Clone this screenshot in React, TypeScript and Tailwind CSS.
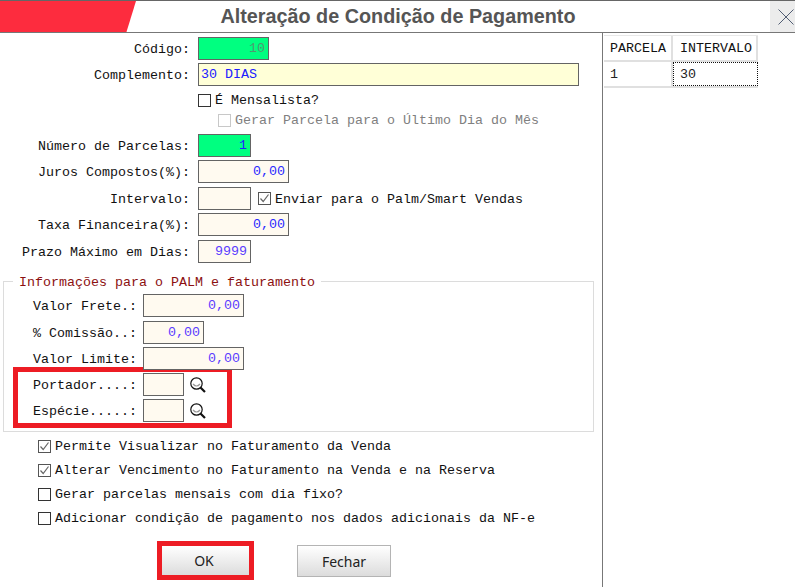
import React from "react";

const mono = "font-['Liberation_Mono','Courier_New',monospace]";

function Field({ w, bg = "bg-[#fffaf0]", color = "text-[#2a2aff]", value = "", right = true }: { w: string; bg?: string; color?: string; value?: string; right?: boolean }) {
  return (
    <div className={`${w} h-[23px] ${bg} ${color} shrink-0 border border-[#646464] pl-[2px] pr-[3px] flex items-center leading-none text-[13.33px] ${right ? "justify-end" : "justify-start"}`}>
      {value}
    </div>
  );
}

function Row({ label, className = "", children }: { label: string; className?: string; children: React.ReactNode }) {
  return (
    <div className={`flex items-center ${className}`}>
      <div className="w-[190px] pt-[3px] text-right text-[#111] leading-none whitespace-pre">{label}</div>
      <div className="ml-[8px] flex items-center">{children}</div>
    </div>
  );
}

function Check({ checked = false, disabled = false }: { checked?: boolean; disabled?: boolean }) {
  return (
    <div className={`w-[13px] h-[13px] shrink-0 border bg-white flex items-center justify-center ${disabled ? "border-[#c8c8c8]" : checked ? "border-[#555]" : "border-[#333]"}`}>
      {checked && (
        <svg width="11" height="11" viewBox="0 0 11 11" fill="none">
          <path d="M1.5 5.5 L4.2 8.5 L9.5 1.5" stroke="#666" strokeWidth="1.2" />
        </svg>
      )}
    </div>
  );
}

function Lens() {
  return (
    <svg width="16" height="16" viewBox="0 0 16 16" fill="none" className="shrink-0">
      <circle cx="6.5" cy="6.5" r="5.7" fill="#fff" stroke="#111" strokeWidth="1.2" />
      <path d="M3 7 Q6.5 11 10 7" stroke="#9a9a9a" strokeWidth="1.2" fill="none" />
      <path d="M10.5 10.5 L15 15" stroke="#111" strokeWidth="2.2" />
    </svg>
  );
}

function BoxRow({ label, w, value, className = "" }: { label: string; w: string; value?: string; className?: string }) {
  return (
    <div className={`flex items-center ${className}`}>
      <div className="w-[136px] pl-[29px] pt-[3px] text-[#111] leading-none whitespace-pre">{label}</div>
      <div className="ml-[3px]">
        <Field w={w} value={value} color="text-[#5a3cff]" />
      </div>
    </div>
  );
}

function LookupRow({ label, className = "" }: { label: string; className?: string }) {
  return (
    <div className={`flex items-center h-[23px] -ml-[14px] ${className}`}>
      <div className="w-[136px] pl-[29px] pt-[3px] text-[#111] leading-none whitespace-pre">{label}</div>
      <div className="ml-[3px] flex items-center">
        <Field w="w-[41px]" />
        <div className="ml-[6px]"><Lens /></div>
      </div>
    </div>
  );
}

function Option({ label, checked = false, className = "" }: { label: string; checked?: boolean; className?: string }) {
  return (
    <div className={`flex items-center h-[14px] pl-[38px] ${className}`}>
      <Check checked={checked} />
      <span className="ml-[4px] pt-[2px] text-[#111] leading-none whitespace-pre">{label}</span>
    </div>
  );
}

export default function App() {
  return (
    <div className={`w-[795px] h-[587px] bg-white overflow-hidden flex flex-col text-[13.33px] ${mono}`}>
      <div className="h-[33px] shrink-0 flex border-t border-t-[#666] border-b border-b-[#777]">
        <div className="relative flex-1 flex items-center justify-center">
          <div className="absolute left-0 top-0 bottom-0 w-[136px] bg-[#fd2c3e] [clip-path:polygon(0_0,100%_0,93%_100%,0_100%)]" />
          <h1 className="font-['Liberation_Sans',Arial,sans-serif] font-bold text-[19.8px] text-[#555] leading-none pl-[26px] whitespace-nowrap">
            Alteração de Condição de Pagamento
          </h1>
        </div>
        <div className="w-[25px] bg-[#ececec] flex items-center justify-end pr-[1px]">
          <svg width="16" height="16" viewBox="0 0 16 16">
            <path d="M0.5 0.5 L15.5 15.5 M15.5 0.5 L0.5 15.5" stroke="#2b3a55" strokeWidth="0.8" />
          </svg>
        </div>
      </div>

      <div className="flex-1 flex min-h-0">
        <div className="w-[602px] shrink-0 flex flex-col pt-[4px]">
          <Row label="Código:">
            <Field w="w-[71px]" bg="bg-[#00ff80]" color="text-[#4f9a70]" value="10" />
          </Row>
          <Row label="Complemento:" className="mt-[3px]">
            <Field w="w-[381px]" bg="bg-[#ffffd7]" color="text-[#2020ff]" value="30 DIAS" right={false} />
          </Row>
          <div className="flex items-center h-[14px] mt-[7px] ml-[198px]">
            <Check />
            <span className="ml-[4px] pt-[2px] text-[#111] leading-none">É Mensalista?</span>
          </div>
          <div className="flex items-center h-[14px] mt-[6px] ml-[218px]">
            <Check disabled />
            <span className="ml-[4px] pt-[2px] text-[#808080] leading-none">Gerar Parcela para o Último Dia do Mês</span>
          </div>
          <Row label="Número de Parcelas:" className="mt-[7px]">
            <Field w="w-[53px]" bg="bg-[#00ff80]" color="text-[#2020ff]" value="1" />
          </Row>
          <Row label="Juros Compostos(%):" className="mt-[3px]">
            <Field w="w-[91px]" value="0,00" />
          </Row>
          <Row label="Intervalo:" className="mt-[4px]">
            <Field w="w-[53px]" />
            <div className="ml-[7px]"><Check checked /></div>
            <span className="ml-[4px] pt-[2px] text-[#111] leading-none">Enviar para o Palm/Smart Vendas</span>
          </Row>
          <Row label="Taxa Financeira(%):" className="mt-[3px]">
            <Field w="w-[91px]" value="0,00" />
          </Row>
          <Row label="Prazo Máximo em Dias:" className="mt-[4px]">
            <Field w="w-[53px]" value="9999" color="text-[#5a3cff]" />
          </Row>

          <div className="relative mt-[18px] ml-[3px] w-[591px] h-[151px] border border-[#dcdcdc] pt-[12px]">
            <div className="absolute left-[9px] -top-[7px] bg-white px-[6px] text-[#8b1010] leading-none py-px whitespace-pre">Informações para o PALM e faturamento</div>
            <BoxRow label="Valor Frete.:" w="w-[101px]" value="0,00" />
            <BoxRow label="% Comissão..:" w="w-[61px]" value="0,00" className="mt-[4px]" />
            <BoxRow label="Valor Limite:" w="w-[101px]" value="0,00" className="mt-[3px] relative z-10" />
            <div className="-mt-[3px] ml-[9px] w-[219px] h-[61px] border-[5px] border-[#ed1c24] flex flex-col pt-[1px]">
              <LookupRow label="Portador....:" />
              <LookupRow label="Espécie.....:" className="mt-[3px]" />
            </div>
          </div>

          <Option label="Permite Visualizar no Faturamento da Venda" checked className="mt-[7px]" />
          <Option label="Alterar Vencimento no Faturamento na Venda e na Reserva" checked className="mt-[10px]" />
          <Option label="Gerar parcelas mensais com dia fixo?" className="mt-[10px]" />
          <Option label="Adicionar condição de pagamento nos dados adicionais da NF-e" className="mt-[10px]" />

          <div className="flex items-start mt-[16px] ml-[157px] font-['Noto_Sans','Open_Sans',sans-serif] text-[14px] text-[#222]">
            <div className="w-[97px] h-[39px] border-[5px] border-[#ed1c24] bg-[linear-gradient(#ffffff,#dcdcdc)] flex items-center justify-center pr-[3px]">OK</div>
            <div className="ml-[43px] mt-[4px] w-[94px] h-[32px] border border-[#b4b4b4] bg-[linear-gradient(#ffffff,#dcdcdc)] flex items-center justify-center">Fechar</div>
          </div>
        </div>

        <div className="flex-1 border-l border-l-[#777] pt-[2px] pl-[1px]">
          <div className="flex h-[27px] w-[154px] border-t border-t-[#e8e8e8] border-b-[2px] border-b-[#e0e0e0] text-[#111]">
            <div className="w-[69px] border-r-[2px] border-r-[#e0e0e0] pl-[6px] pt-[1px] flex items-center">PARCELA</div>
            <div className="flex-1 border-r-[2px] border-r-[#e0e0e0] pl-[7px] pt-[1px] flex items-center">INTERVALO</div>
          </div>
          <div className="flex h-[26px] w-[154px] border-b-[2px] border-b-[#e0e0e0] text-[#222]">
            <div className="w-[69px] border-r-[2px] border-r-[#e0e0e0] pl-[6px] pt-[1px] flex items-center">1</div>
            <div className="flex-1 border border-dotted border-[#111] pl-[6px] pt-[1px] flex items-center">30</div>
          </div>
        </div>
      </div>
    </div>
  );
}
